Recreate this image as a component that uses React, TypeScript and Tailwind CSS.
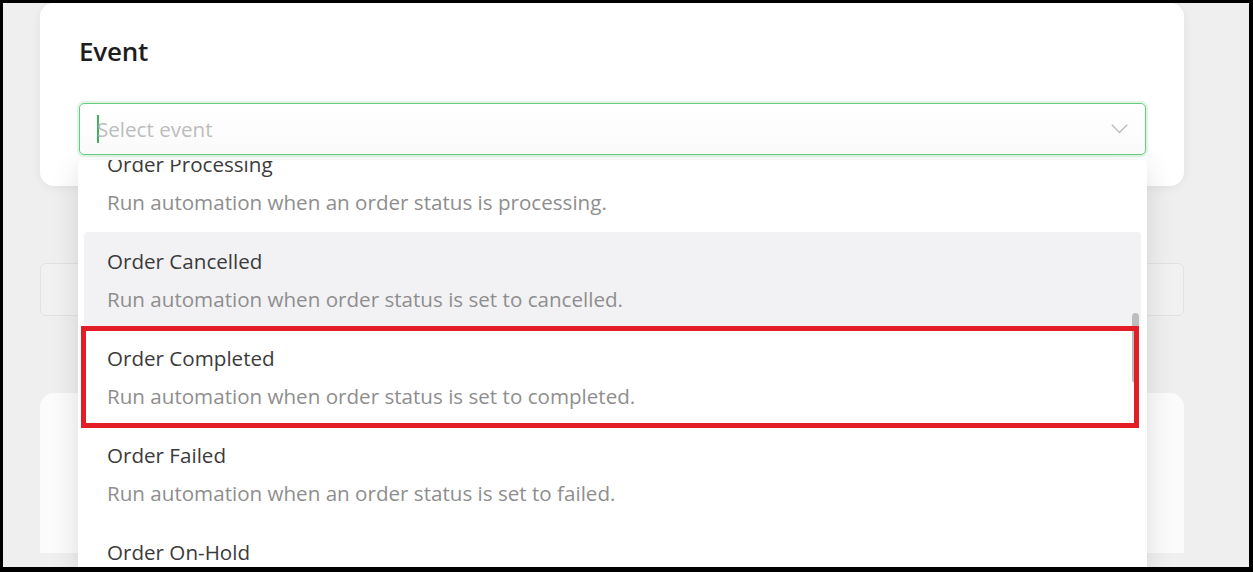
import React from "react";

type Item = { title: string; desc: string; active?: boolean };

const items: Item[] = [
  { title: "Order Processing", desc: "Run automation when an order status is processing." },
  { title: "Order Cancelled", desc: "Run automation when order status is set to cancelled.", active: true },
  { title: "Order Completed", desc: "Run automation when order status is set to completed." },
  { title: "Order Failed", desc: "Run automation when an order status is set to failed." },
  { title: "Order On-Hold", desc: "Run automation when an order status is set to on-hold." },
];

export default function App() {
  return (
    <div
      className="w-[1253px] h-[572px] overflow-hidden border-black border-l-[3px] border-t-[3px] border-r-[4px] border-b-[5px] bg-[#efefef]"
      style={{ fontFamily: '"Open Sans", "Noto Sans", sans-serif' }}
    >
      <div className="relative h-full pl-[37px] pr-[65px]">
        {/* Card 1 */}
        <div className="relative z-10 h-[183px] rounded-[14px] bg-white shadow-[0_2px_10px_rgba(0,0,0,0.06)] pl-[39px] pr-[38px] pt-[30px]">
          <h2 className="text-[26px] leading-[36px] font-semibold text-[#1e1e1e] tracking-[-0.2px]">Event</h2>
          <div className="relative mt-[34px]">
            <div className="relative z-10 h-[52px] rounded-[5px] border-[1.5px] border-[#66cc82] shadow-[0_0_0_2px_rgba(102,204,130,0.2)] bg-gradient-to-b from-white to-[#fafafa] flex items-center pl-[17px] pr-[17px]">
              <span className="w-[1.5px] h-[28px] bg-[#3cb35c] -mr-[1.5px]" />
              <span className="text-[20.6px] text-[#bdbdbd] leading-none">Select event</span>
              <div className="flex-1" />
              <svg width="17" height="10" viewBox="0 0 17 10">
                <polyline points="0.8,0.8 8.5,8.5 16.2,0.8" fill="none" stroke="#bdbdbd" strokeWidth="1.4" />
              </svg>
            </div>

            {/* Dropdown */}
            <div className="absolute left-[-1px] right-[-1px] top-[57px] h-[410px] overflow-hidden bg-white rounded-[4px] shadow-[0_6px_28px_rgba(0,0,0,0.12)]">
              <div className="mt-[-25px] px-[6px]">
                {items.map((it) => (
                  <div
                    key={it.title}
                    className={
                      "h-[95px] mb-[2px] rounded-[4px] pl-[23px] pt-[15px] " +
                      (it.active ? "bg-[#f2f2f4]" : "bg-white")
                    }
                  >
                    <div className="text-[20.6px] leading-[28px] text-[#3b3b3b]">{it.title}</div>
                    <div className="mt-[10px] text-[20.6px] leading-[28px] text-[#8e8e8e]">{it.desc}</div>
                  </div>
                ))}
              </div>
              {/* scrollbar thumb */}
              <div className="absolute left-[1054px] top-[153px] w-[7px] h-[70px] rounded-full bg-[#bdbdbd]" />
              {/* red annotation */}
              <div className="absolute left-[3px] top-[166px] w-[1058px] h-[102px] border-[5px] border-[#e21d25]" />
            </div>
          </div>
        </div>

        {/* Card 2 */}
        <div className="mt-[77px] h-[53px] rounded-[6px] border border-[#e2e2e2] bg-[#f1f1f1]" />

        {/* Card 3 */}
        <div className="mt-[77px] h-[160px] rounded-t-[14px] bg-[#fbfbfb]" />
      </div>
    </div>
  );
}
